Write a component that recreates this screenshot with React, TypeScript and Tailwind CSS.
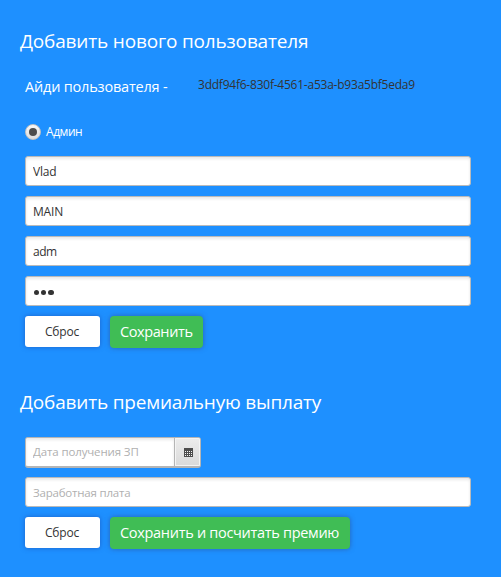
const inputClass =
  'block w-[446px] h-[30px] rounded-[3px] border border-[#bababa] bg-white px-[7px] text-[12px] leading-[28px] text-[#333333] placeholder:text-[#b0b0b0] outline-none shadow-[inset_0_2px_3px_#e9e9e9]';

function Field({ value, placeholder, tracking }: { value?: string; placeholder?: string; tracking: string }) {
  return <input className={`${inputClass} ${tracking}`} defaultValue={value} placeholder={placeholder} />;
}

function Reset() {
  return (
    <button className="h-[31px] w-[75px] rounded-[3px] bg-white pl-[20px] text-left text-[12px] leading-[31px] tracking-[-0.2px] text-[#333333] shadow-[0_0_5px_rgba(30,60,160,0.55)]">
      Сброс
    </button>
  );
}

function Submit({ label, size }: { label: string; size: string }) {
  return (
    <button
      className={`h-[32px] rounded-[4px] bg-[#40bd55] pl-[10px] text-left text-[14.5px] leading-[30px] whitespace-nowrap text-white shadow-[0_0_5px_rgba(50,70,130,0.6)] ${size}`}
    >
      {label}
    </button>
  );
}

function CalendarIcon() {
  return (
    <svg width="9" height="9" viewBox="0 0 9 9" shapeRendering="crispEdges">
      <path fill="#4d4d4d" d="M0 0h9v9H0z" />
      <path fill="#f4f4f4" d="M1 3h1v1H1zM3 3h1v1H3zM5 3h1v1H5zM7 3h1v1H7zM1 5h1v1H1zM3 5h1v1H3zM5 5h1v1H5zM7 5h1v1H7zM1 7h1v1H1zM3 7h1v1H3zM5 7h1v1H5zM7 7h1v1H7z" />
    </svg>
  );
}

export default function App() {
  return (
    <main className="h-[577px] w-[501px] overflow-hidden bg-[#1e90ff] pt-[27px] font-['Open_Sans','Noto_Sans',sans-serif] text-white">
      <h1 className="ml-[20px] h-[28px] text-[19px] leading-[28px] tracking-[-0.17px] whitespace-nowrap">Добавить нового пользователя</h1>
      <div className="ml-[25px] mt-[20px] flex h-[24px] whitespace-nowrap">
        <span className="w-[173px] text-[14.5px] leading-[24px] tracking-[-0.19px]">Айди пользователя -</span>
        <span className="text-[12px] leading-[20px] tracking-[-0.23px] text-[#333333]">3ddf94f6-830f-4561-a53a-b93a5bf5eda9</span>
      </div>
      <label className="ml-[25px] mt-[24px] flex h-[18px] items-center gap-[5px] text-[12px] leading-[18px] tracking-[-0.45px]">
        <span className="flex size-[16px] items-center justify-center rounded-full border border-[#c2c2c2] bg-linear-to-b from-[#f8f8f8] to-[#dedede]">
          <span className="size-[8px] rounded-full bg-[#4d4d4d]" />
        </span>
        Админ
      </label>
      <form className="ml-[25px] mt-[15px] flex flex-col gap-[10px]">
        <Field value="Vlad" tracking="tracking-[-0.2px]" />
        <Field value="MAIN" tracking="tracking-[-0.2px]" />
        <Field value="adm" tracking="tracking-[-0.5px]" />
        <div className={`${inputClass} flex items-center`}>
          <span className="ml-[0.5px] mt-[3px] flex gap-[1.8px]">
            <i className="size-[5.5px] rounded-full bg-[#333333]" />
            <i className="size-[5.5px] rounded-full bg-[#333333]" />
            <i className="size-[5.5px] rounded-full bg-[#333333]" />
          </span>
        </div>
        <div className="flex h-[32px] gap-[10px]">
          <Reset />
          <Submit label="Сохранить" size="w-[93px] tracking-[-0.4px]" />
        </div>
      </form>
      <h1 className="ml-[20px] mt-[40px] h-[28px] text-[19px] leading-[28px] tracking-[-0.19px] whitespace-nowrap">Добавить премиальную выплату</h1>
      <form className="ml-[25px] mt-[21px] flex flex-col gap-[9px]">
        <div className="flex h-[31px] w-[176px] overflow-hidden rounded-[3px] border border-b-2 border-[#b5b5b5] bg-white">
          <input
            className="w-[148px] px-[7px] text-[11.5px] tracking-[-0.13px] outline-none placeholder:text-[#b0b0b0] shadow-[inset_0_2px_3px_#e9e9e9]"
            placeholder="Дата получения ЗП"
          />
          <span className="flex grow items-center justify-center border-l border-[#b5b5b5] bg-linear-to-b from-[#ececec] to-[#dadada] pl-px pt-px shadow-[inset_0_0_0_1px_#f4f4f4]">
            <CalendarIcon />
          </span>
        </div>
        <Field placeholder="Заработная плата" tracking="text-[11.5px]! tracking-[-0.2px]" />
        <div className="mt-[1px] flex h-[32px] gap-[10px]">
          <Reset />
          <Submit label="Сохранить и посчитать премию" size="w-[240px] tracking-[-0.3px]" />
        </div>
      </form>
    </main>
  );
}
